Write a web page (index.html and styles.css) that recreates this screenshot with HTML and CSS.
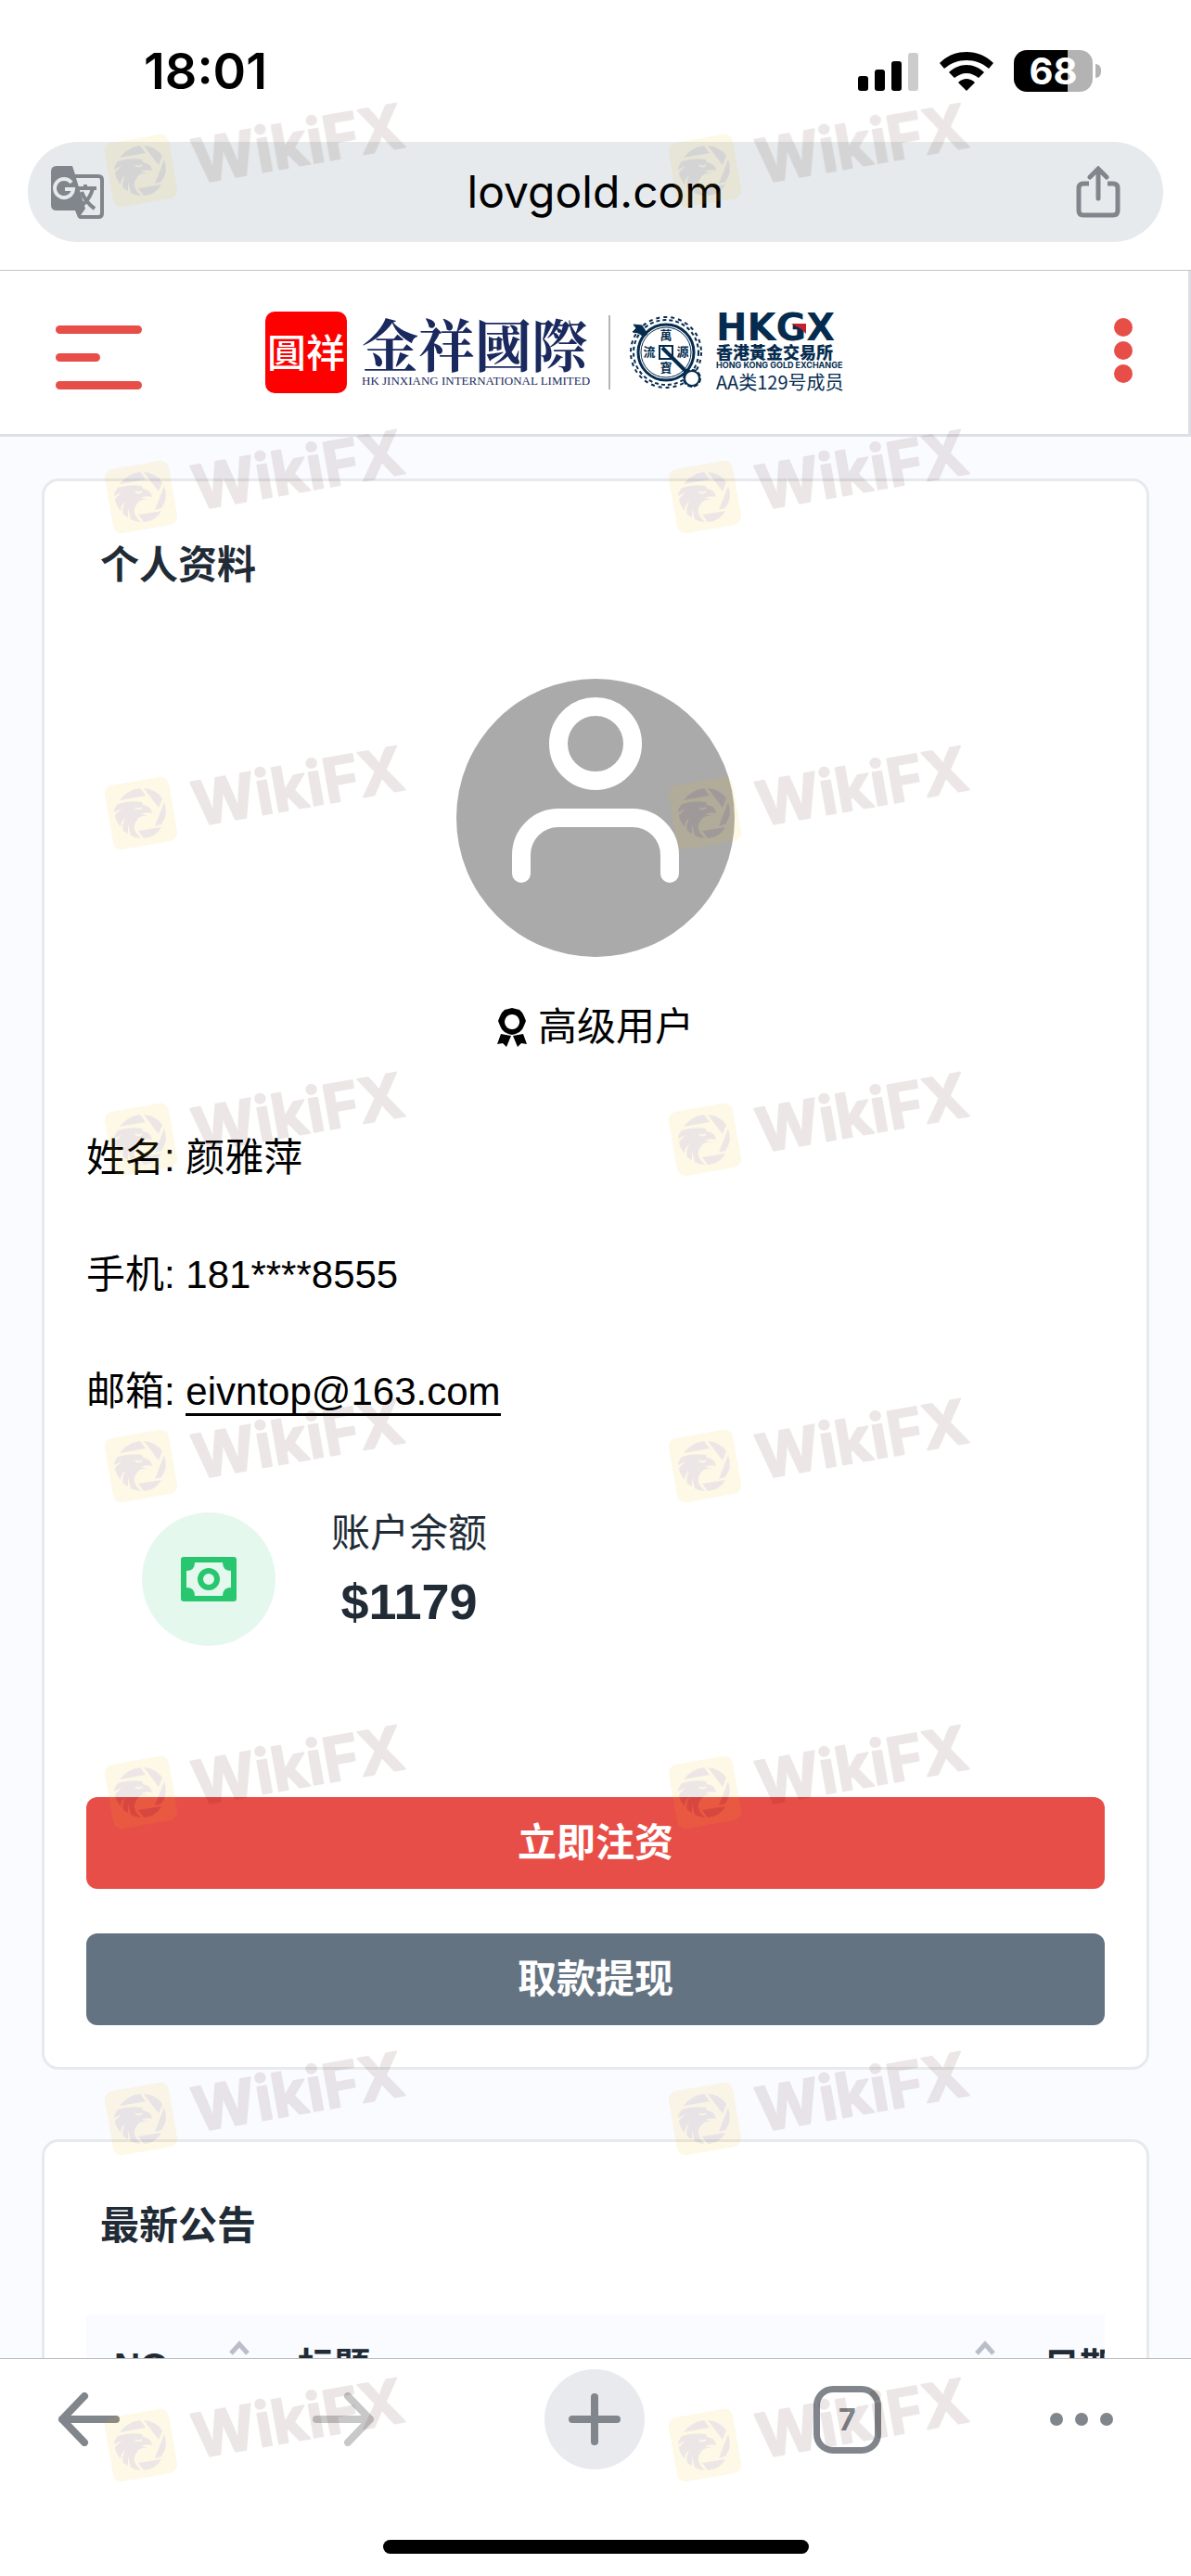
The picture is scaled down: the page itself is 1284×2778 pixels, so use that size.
FILE: index.html
```html
<!DOCTYPE html>
<html lang="zh-CN">
<head>
  <meta charset="UTF-8" />
  <meta name="viewport" content="width=device-width, initial-scale=1.0"/>
  <title>个人资料</title>
  <link rel="stylesheet" href="styles.css">
</head>
<body>
  <div class="status-bar">
    <span class="clock">18:01</span>
    <div class="status-icons">
      <svg width="66" height="42" viewBox="0 0 66 42">
        <rect x="0" y="26" width="11" height="16" rx="3"/>
        <rect x="18" y="19" width="11" height="23" rx="3"/>
        <rect x="36" y="10" width="11" height="32" rx="3"/>
        <rect x="54" y="1" width="11" height="41" rx="3" fill="#ccc"/>
      </svg>
      <svg width="58" height="42" viewBox="0 0 58 42">
        <path d="M29 0C18 0 8 4 0 12l5 6c7-6 15-9 24-9s17 3 24 9l5-6C50 4 40 0 29 0z"/>
        <path d="M29 14c-7 0-14 3-19 8l6 6c4-3 8-5 13-5s9 2 13 5l6-6c-5-5-12-8-19-8z"/>
        <path d="M29 29c-3 0-6 1-9 4l9 9 9-9c-3-3-6-4-9-4z"/>
      </svg>
      <div class="battery"><span>68</span></div>
    </div>
  </div>

  <div class="url-bar">
    <button class="icon-btn" aria-label="翻译">
      <svg width="57" height="57" viewBox="0 0 57 57">
        <path d="M6 0h17l3 9h25q6 0 6 6v36q0 6-6 6H32q-3 0-4-4l-2-5H6q-6 0-6-6V6q0-6 6-6z" fill="#80868b"/>
        <path d="M27 13h24q2 0 2 2v36q0 2-2 2H32l5-7-10-33z" fill="#e6eaed"/>
        <path d="M29 24h20M37 20v4M33 28c3 8 7 13 14 18M45 24c-2 9-6 14-12 19" fill="none" stroke="#80868b" stroke-width="4"/>
        <path d="M22 18a10 10 0 1 0 2 7h-9" fill="none" stroke="#e6eaed" stroke-width="4"/>
      </svg>
    </button>
    <span class="url">lovgold.com</span>
    <button class="icon-btn" aria-label="分享">
      <svg width="48" height="57" viewBox="0 0 48 57" fill="none" stroke="#80868b" stroke-width="5" stroke-linecap="round">
        <path d="M14 19H8q-5 0-5 5v24q0 5 5 5h32q5 0 5-5V24q0-5-5-5h-6" stroke-linecap="butt"/>
        <path d="M24 35V3M15 12l9-9 9 9"/>
      </svg>
    </button>
  </div>

  <div class="page">
    <header class="header">
      <button class="menu-btn" aria-label="菜单"><i></i><i></i><i></i></button>
      <div class="logo">
        <div class="seal">圓祥</div>
        <div class="brand">
          <strong>金祥國際</strong>
          <small>HK JINXIANG INTERNATIONAL LIMITED</small>
        </div>
        <svg class="emblem" width="80" height="80" viewBox="0 0 80 80" fill="none" stroke="#052c4f">
          <circle cx="40" cy="40" r="38" stroke-width="2" stroke-dasharray="4 4"/>
          <circle cx="40" cy="40" r="35" stroke-width="2" stroke-dasharray="4 3"/>
          <circle cx="40" cy="40" r="30" stroke-width="3"/>
          <circle cx="40" cy="40" r="27" stroke-width="1"/>
          <rect x="33" y="33" width="14" height="14" stroke-width="2"/>
          <path d="M36 35l28 28" stroke-width="4"/>
          <path d="M5 10l9 1 6 9-4 3-6-4-6-1 4-4z" fill="#052c4f"/>
          <circle cx="68" cy="68" r="8" fill="#fff" stroke-width="2"/>
          <circle cx="68" cy="68" r="9" stroke-width="2" stroke-dasharray="5 2"/>
          <g class="coin-text">
            <text x="40" y="26">萬</text>
            <text x="40" y="61">寶</text>
            <text x="22" y="44">流</text>
            <text x="58" y="44">源</text>
          </g>
        </svg>
        <div class="exchange">
          <div class="hkgx">HKGX
            <svg width="16" height="11" viewBox="0 0 16 11"><path d="M0 0h16v11L11 6z" fill="#c4202f"/></svg>
          </div>
          <div class="exchange-cn">香港黃金交易所</div>
          <div class="exchange-en">HONG KONG GOLD EXCHANGE</div>
          <div class="member">AA类129号成员</div>
        </div>
      </div>
      <button class="more-btn" aria-label="更多"><i></i><i></i><i></i></button>
    </header>

    <main>
      <section class="card">
        <h2>个人资料</h2>
        <svg class="avatar" width="300" height="300" viewBox="0 0 300 300">
          <circle cx="150" cy="150" r="150" fill="#aaa"/>
          <g fill="none" stroke="#fff" stroke-width="20" stroke-linecap="round">
            <circle cx="150" cy="70" r="40"/>
            <path d="M70 210v-20a40 40 0 0 1 40-40h80a40 40 0 0 1 40 40v20"/>
          </g>
        </svg>
        <p class="level">
          <svg width="32" height="42" viewBox="0 0 32 42">
            <path fill-rule="evenodd" d="M16 0l4 1 4 1 3 3 2 4 2 5-2 5-2 4-3 3-4 2-4 1-4-1-4-2-3-3-2-4-2-5 2-5 2-4 3-3 4-1zM16 7a8 8 0 1 0 .1 0z"/>
            <path d="M4 28l11 2-5 12-4-4-6 1zM28 28l-11 2 5 12 4-4 6 1z"/>
          </svg>
          高级用户
        </p>

        <div class="info">
          <p>姓名: 颜雅萍</p>
          <p>手机: 181****8555</p>
          <p>邮箱: <a href="mailto:eivntop@163.com">eivntop@163.com</a></p>
        </div>

        <div class="balance">
          <div class="balance-icon">
            <svg width="60" height="48" viewBox="0 0 60 48">
              <rect width="60" height="48" rx="3" fill="#28c76f"/>
              <path d="M15 6h30q0 9 9 9v18q-9 0-9 9H15q0-9-9-9V15q9 0 9-9z" fill="#e5f8ed"/>
              <circle cx="30" cy="24" r="9" fill="none" stroke="#28c76f" stroke-width="6"/>
            </svg>
          </div>
          <div class="balance-text">
            <span>账户余额</span>
            <strong>$1179</strong>
          </div>
        </div>

        <button class="btn deposit">立即注资</button>
        <button class="btn withdraw">取款提现</button>
      </section>

      <section class="card">
        <h2>最新公告</h2>
        <div class="table-wrap">
          <table>
            <thead>
              <tr>
                <th class="col-no"><div>NO.
                  <svg width="24" height="56" viewBox="0 0 24 56"><path d="M3 14L12 4l9 10M3 42l9 10 9-10"/></svg></div></th>
                <th class="col-title"><div>标题
                  <svg width="24" height="56" viewBox="0 0 24 56"><path d="M3 14L12 4l9 10M3 42l9 10 9-10"/></svg></div></th>
                <th class="col-date"><div>日期</div></th>
              </tr>
            </thead>
          </table>
        </div>
      </section>
    </main>
  </div>

  <nav class="toolbar">
    <div class="tools">
      <button aria-label="后退">
        <svg width="68" height="58" viewBox="0 0 68 58"><path d="M63 29H5M29 4L5 29l24 25"/></svg>
      </button>
      <button class="forward" aria-label="前进" disabled>
        <svg width="68" height="58" viewBox="0 0 68 58"><path d="M5 29h58M39 4l24 25-24 25"/></svg>
      </button>
      <button class="add" aria-label="新标签页">
        <svg width="56" height="56" viewBox="0 0 56 56"><path d="M28 4v48M4 28h48"/></svg>
      </button>
      <button class="tabs">7</button>
      <button class="dots" aria-label="菜单">
        <svg width="68" height="14" viewBox="0 0 68 14"><circle cx="7" cy="7" r="7"/><circle cx="34" cy="7" r="7"/><circle cx="61" cy="7" r="7"/></svg>
      </button>
    </div>
    <div class="home-line"></div>
  </nav>

  <!-- watermark -->
  <svg class="defs" width="0" height="0">
    <symbol id="wikifx" viewBox="0 0 340 90">
      <g transform="rotate(-10 40 40)">
        <rect x="5" y="5" width="70" height="70" rx="9" fill="#f5b400"/>
      </g>
      <g fill="#3c0f00">
        <path d="M17 26l28-5-6-8q-14 2-22 13z"/>
        <path d="M43 13l16 21 4-10q-7-10-20-11z"/>
        <path d="M65 28q5 13-3 24l-7 2z"/>
        <path d="M37 59l25-4q-6 11-19 12z"/>
        <path d="M15 30q12-4 26-2l1 3q9 1 10 9-6-2-12 1l8 2q-9-1-12 4-8 9 4 20-6 0-11-3l-3-12v10l-5-3q-2-6 2-14-5 4-5 10-6-8-6-13l7-7-8 4q0-4 4-9z"/>
      </g>
      <path d="M34 34q3 3 7 0" fill="none" stroke="#f5b400" stroke-width="2"/>
      <text transform="rotate(-10 96 60)" x="101" y="55" class="wm-text">WikiFX</text>
    </symbol>
  </svg>
  <div class="watermark" aria-hidden="true">
    <svg><use href="#wikifx"/></svg><svg><use href="#wikifx"/></svg>
    <svg><use href="#wikifx"/></svg><svg><use href="#wikifx"/></svg>
    <svg><use href="#wikifx"/></svg><svg><use href="#wikifx"/></svg>
    <svg><use href="#wikifx"/></svg><svg><use href="#wikifx"/></svg>
    <svg><use href="#wikifx"/></svg><svg><use href="#wikifx"/></svg>
    <svg><use href="#wikifx"/></svg><svg><use href="#wikifx"/></svg>
    <svg><use href="#wikifx"/></svg><svg><use href="#wikifx"/></svg>
    <svg><use href="#wikifx"/></svg><svg><use href="#wikifx"/></svg>
  </div>
</body>
</html>
```
FILE: styles.css
```css
* {
  box-sizing: border-box;
}
body {
  font-family: "Liberation Sans", "Noto Sans CJK SC", sans-serif;
  font-size: 42px;
  line-height: 63px;
  color: #000;
  background: #fff;
  margin: 0;
  height: 100vh;
  display: flex;
  flex-direction: column;
  overflow: hidden;
  position: relative;
}
button {
  font: inherit;
  border: none;
  background: none;
  padding: 0;
  cursor: pointer;
}
svg {
  display: block;
  flex: none;
}
p, h2 {
  margin: 0;
}

/* status bar */
.status-bar {
  flex: none;
  height: 153px;
  padding: 0 97px 0 155px;
  display: flex;
  align-items: center;
  justify-content: space-between;
}
.clock {
  font-family: Inter, sans-serif;
  font-size: 54px;
  font-weight: 600;
}
.status-icons {
  display: flex;
  align-items: center;
  gap: 22px;
}
.battery {
  position: relative;
  width: 85px;
  height: 45px;
  margin-right: 9px;
  border-radius: 14px;
  background: linear-gradient(90deg, #000 58px, #b3b3b3 58px);
  color: #fff;
  font-family: Inter, sans-serif;
  font-size: 40px;
  font-weight: 700;
  line-height: 45px;
  text-align: center;
}
.battery::after {
  content: "";
  position: absolute;
  right: -9px;
  top: 15px;
  width: 6px;
  height: 15px;
  border-radius: 0 6px 6px 0;
  background: #b3b3b3;
}

/* address bar */
.url-bar {
  flex: none;
  height: 108px;
  margin: 0 30px 30px;
  padding: 0 46px 0 25px;
  border-radius: 54px;
  background: #e6eaed;
  display: flex;
  align-items: center;
  justify-content: space-between;
}
.url {
  margin-left: 12px;
  font-family: Inter, sans-serif;
  font-size: 48px;
  line-height: 60px;
}

/* page */
.page {
  flex: 1;
  min-height: 0;
  overflow: hidden;
  border-top: 1px solid #c4c6c8;
  background: #fafbff;
}
.header {
  height: 179px;
  padding: 0 60px;
  background: #fff;
  border-right: 3px solid #dce0e6;
  border-bottom: 3px solid #dce0e6;
  display: flex;
  align-items: center;
}
.menu-btn {
  width: 93px;
  display: flex;
  flex-direction: column;
  gap: 21px;
  margin-top: 10px;
}
.menu-btn i {
  height: 9px;
  border-radius: 5px;
  background: #e84e48;
}
.menu-btn i:nth-child(2) {
  width: 48px;
}
.more-btn {
  margin-left: auto;
  margin-bottom: 5px;
  display: flex;
  flex-direction: column;
  gap: 5px;
}
.more-btn i {
  width: 20px;
  height: 20px;
  border-radius: 50%;
  background: #e84e48;
}
.logo {
  margin-left: 133px;
  display: flex;
  align-items: center;
}
.seal {
  width: 88px;
  height: 88px;
  border-radius: 10px;
  background: #fe0000;
  color: #fff;
  font-family: "Noto Sans CJK TC", sans-serif;
  font-size: 42px;
  font-weight: 500;
  line-height: 84px;
  text-align: center;
}
.brand {
  width: 242px;
  margin-left: 16px;
  color: #1b2a5e;
  display: flex;
  flex-direction: column;
  white-space: nowrap;
}
.brand strong {
  font-family: "Noto Serif CJK TC", "Noto Sans CJK TC", serif;
  font-size: 61px;
  line-height: 62px;
}
.brand small {
  font-family: "Liberation Serif", serif;
  font-size: 13px;
  line-height: 20px;
}
.emblem {
  box-sizing: content-box;
  margin-left: 24px;
  padding-left: 20px;
  border-left: 2px solid #b5b5b5;
}
.coin-text {
  fill: #052c4f;
  stroke: none;
  font-family: "Noto Sans CJK TC", sans-serif;
  font-size: 13px;
  font-weight: 700;
  text-anchor: middle;
}
.exchange {
  margin-left: 14px;
  color: #052c4f;
  white-space: nowrap;
}
.hkgx {
  position: relative;
  font-family: "DejaVu Sans", sans-serif;
  font-size: 40px;
  font-weight: 700;
  line-height: 34px;
}
.hkgx svg {
  position: absolute;
  left: 81px;
  top: 13px;
}
.exchange-cn {
  font-family: "Noto Sans CJK TC", sans-serif;
  font-size: 18px;
  font-weight: 900;
  line-height: 19px;
}
.exchange-en {
  font-family: Inter, sans-serif;
  font-size: 9px;
  font-weight: 700;
  line-height: 10px;
}
.member {
  font-family: "Noto Sans CJK SC", sans-serif;
  font-size: 20px;
  line-height: 26px;
}

/* cards */
main {
  padding: 45px;
}
.card {
  padding: 59px 45px 45px;
  margin-bottom: 75px;
  background: #fff;
  border: 3px solid #e6e9ed;
  border-radius: 18px;
}
.card h2 {
  margin: 0 15px 64px;
  font-size: 42px;
  font-weight: 600;
  color: #212b36;
}
.avatar {
  margin: 91px auto 44px;
}
.level {
  display: flex;
  align-items: center;
  justify-content: center;
  gap: 12px;
}
.info {
  margin-top: 78px;
  display: grid;
  gap: 63px;
}
.info a {
  color: #000;
  text-decoration: none;
  border-bottom: 3px solid #000;
}
.balance {
  margin: 90px 60px 163px;
  display: flex;
  gap: 60px;
  color: #212b36;
}
.balance-icon {
  width: 144px;
  height: 144px;
  margin-top: 9px;
  border-radius: 50%;
  background: #e5f8ed;
  display: flex;
  align-items: center;
  justify-content: center;
}
.balance-text {
  display: flex;
  flex-direction: column;
  text-align: center;
}
.balance-text strong {
  font-size: 54px;
  line-height: 84px;
}
.btn {
  display: block;
  width: 100%;
  height: 99px;
  border-radius: 12px;
  color: #fff;
  font-weight: 600;
}
.deposit {
  background: #e84e48;
  margin-bottom: 48px;
}
.withdraw {
  background: #637381;
}

/* notice table */
.table-wrap {
  overflow: hidden;
}
table {
  width: 1200px;
  table-layout: fixed;
  border-collapse: collapse;
  background: #fafbff;
}
th {
  padding: 24px 21px 30px 30px;
  color: #212b36;
  font-size: 39px;
  text-align: left;
}
th div {
  display: flex;
  align-items: center;
  justify-content: space-between;
}
th svg {
  fill: none;
  stroke: #b9bec9;
  stroke-width: 5;
}
.col-no {
  width: 198px;
}
.col-title {
  width: 804px;
}

/* bottom bar */
.toolbar {
  flex: none;
  height: 235px;
  background: #fff;
  border-top: 1px solid #bbb;
}
.tools {
  height: 108px;
  margin-top: 11px;
  padding: 0 84px 0 62px;
  display: flex;
  align-items: center;
  justify-content: space-between;
}
.tools svg {
  fill: none;
  stroke: #80868b;
  stroke-width: 8;
  stroke-linecap: round;
  stroke-linejoin: round;
}
.tools button:disabled svg {
  stroke: #c8c8c8;
}
.forward {
  margin-left: 24px;
}
.add {
  width: 108px;
  height: 108px;
  border-radius: 50%;
  background: #e8eaed;
  display: flex;
  align-items: center;
  justify-content: center;
}
.tabs {
  width: 73px;
  height: 73px;
  border: 7px solid #80868b;
  border-radius: 21px;
  color: #80868b;
  font-family: Inter, sans-serif;
  font-size: 32px;
  font-weight: 700;
  line-height: 59px;
}
.tools .dots svg {
  fill: #80868b;
  stroke: none;
}
.home-line {
  width: 459px;
  height: 15px;
  margin: 76px auto 0;
  border-radius: 8px;
  background: #000;
}

/* watermark over everything */
.defs {
  position: absolute;
}
.watermark {
  position: absolute;
  left: 112px;
  top: 144px;
  display: grid;
  grid-template-columns: 608px 340px;
  grid-template-rows: 352px 341px repeat(6, 352px);
  opacity: 0.1;
  pointer-events: none;
}
.watermark svg {
  width: 340px;
  height: 90px;
  overflow: visible;
}
#wikifx {
  overflow: visible;
}
.wm-text {
  fill: #3c0f00;
  stroke: #3c0f00;
  stroke-width: 2;
  stroke-linejoin: round;
  font-family: Inter, sans-serif;
  font-size: 66px;
  font-weight: 700;
}
```
